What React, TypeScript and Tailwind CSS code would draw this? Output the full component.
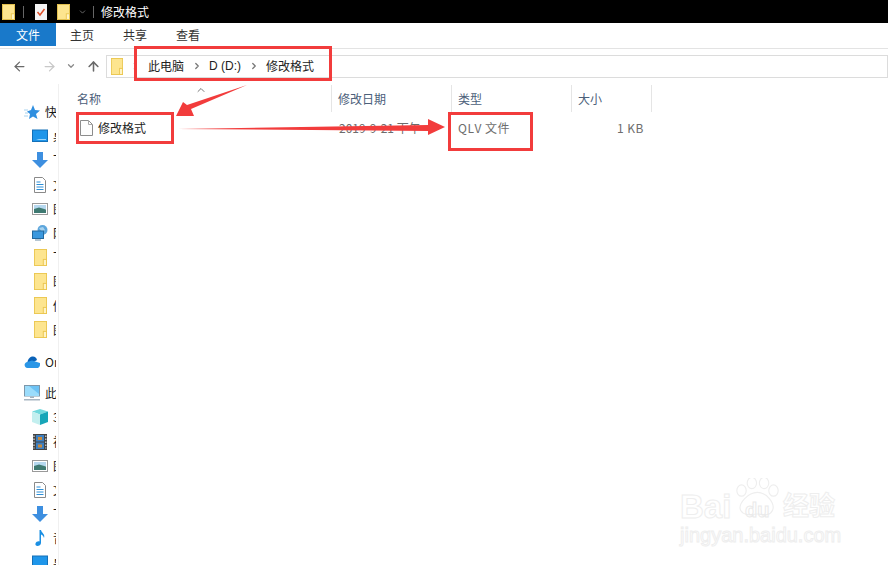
import { ReactNode } from 'react'
import { ArrowLeft, ArrowRight, ArrowUp, ChevronDown, ChevronRight, ChevronUp } from 'lucide-react'

function Folder({ className = 'h-[17px] w-[13px]' }: { className?: string }) {
  return (
    <svg className={className} viewBox="0 0 14 18" preserveAspectRatio="none">
      <rect x="0.5" y="0.5" width="13" height="17" fill="#fde58f" stroke="#ebc64f" />
      <rect x="10" y="11" width="3.5" height="6.5" fill="#fff3c4" stroke="#ebc64f" />
    </svg>
  )
}

function Monitor() {
  return (
    <svg className="h-4 w-4" viewBox="0 0 16 16">
      <rect x="0.5" y="2" width="15" height="11.5" fill="#1f96ea" stroke="#1470b8" />
      <path d="M2 12 L14 12 L14 11 L7 11 L4 12Z" fill="#9bd6fb" />
    </svg>
  )
}

function Download() {
  return (
    <svg className="h-4 w-4" viewBox="0 0 16 16">
      <path d="M5 0 H11 V8 H16 L8 16 L0 8 H5Z" fill="#3d8fe0" />
    </svg>
  )
}

function Doc() {
  return (
    <svg className="h-4 w-4" viewBox="0 0 16 16">
      <path d="M2.5 0.5 H10.5 L13.5 3.5 V15.5 H2.5Z" fill="#fff" stroke="#8a8a8a" />
      <path d="M4.500 5h4M4.500 7.500h7M4.500 10h7M4.500 12.500h7" stroke="#2c8fd8" strokeWidth="1" />
    </svg>
  )
}

function Pictures() {
  return (
    <svg className="h-4 w-4" viewBox="0 0 16 16">
      <rect x="0.500" y="2.500" width="15" height="11" fill="#fff" stroke="#9a9a9a" />
      <rect x="2" y="4" width="12" height="4" fill="#b6d8ef" />
      <path d="M2 8 L7 6.500 L14 8.500 V12 H2Z" fill="#3f7a72" />
    </svg>
  )
}

function Network() {
  return (
    <svg className="h-4 w-4" viewBox="0 0 16 16">
      <circle cx="10.500" cy="5" r="5" fill="#5da6dc" />
      <path d="M7 3 L11 2 L13 5 L10 7Z" fill="#a8d2ee" />
      <rect x="0.500" y="6" width="11" height="7.500" fill="#3a98de" stroke="#23699e" />
      <rect x="3" y="14.500" width="6" height="1" fill="#6d8ea8" />
    </svg>
  )
}

function OneDrive() {
  return (
    <svg className="h-[12px] w-4" viewBox="0 0 16 12">
      <path d="M3.500 6 C4 2.500 6.500 0.500 9 0.500 C11 0.500 12.500 2 13 4 L8 7Z" fill="#0a62b8" />
      <path d="M3.500 12 C0 12 -0.500 7 3 6 L8 4.500 L16 7 C16.500 10 15 12 13 12Z" fill="#2a96e6" />
    </svg>
  )
}

function ThisPc() {
  return (
    <svg className="h-4 w-4" viewBox="0 0 16 16">
      <rect x="0.500" y="0.500" width="15" height="10.500" fill="#6cc2f4" stroke="#7d97aa" />
      <path d="M1 11h14v-2L5 1H1Z" fill="#9bdcfb" />
      <rect x="6" y="11.500" width="4" height="1.500" fill="#9fb1bf" />
      <rect x="0" y="14" width="16" height="1.500" fill="#a8b6c2" />
    </svg>
  )
}

function Cube() {
  return (
    <svg className="h-4 w-4" viewBox="0 0 16 16">
      <path d="M8 0 L16 2.500 L8 5.500 L0 2.500Z" fill="#72d9dd" />
      <path d="M0 2.500 L8 5.500 V16 L0 13Z" fill="#c3efef" />
      <path d="M16 2.500 L8 5.500 V16 L16 13Z" fill="#17a6b8" />
    </svg>
  )
}

function Film() {
  return (
    <svg className="h-4 w-4" viewBox="0 0 16 16">
      <rect x="1" y="0" width="14" height="16" fill="#444" />
      <rect x="4" y="1" width="8" height="6.500" fill="#3c7fc2" />
      <rect x="4" y="8.500" width="8" height="6.500" fill="#3c7fc2" />
      <rect x="6" y="3" width="4" height="3" fill="#c98a3a" />
      <rect x="6" y="10.500" width="4" height="3" fill="#c98a3a" />
      <path d="M2 1.500v13" stroke="#ddd" strokeWidth="1.200" strokeDasharray="1.500 1.500" />
      <path d="M13.800 1.500v13" stroke="#ddd" strokeWidth="1.200" strokeDasharray="1.500 1.500" />
    </svg>
  )
}

function Music() {
  return (
    <svg className="h-4 w-4" viewBox="0 0 16 16">
      <path d="M7.500 0 H9 C9.500 3 13.500 4 12 8 C11.500 6 10.500 5 9 4.500 V13 C9 15 7 16 5.500 16 C4 16 3 15 3.500 13.500 C4 12 6 11 7.500 11.500Z" fill="#1a8fe3" />
    </svg>
  )
}

function NavRow({ icon, label, top = false }: { icon: ReactNode; label: string; top?: boolean }) {
  return (
    <div className={`flex h-[24.200px] shrink-0 items-center ${top ? 'pl-[24px]' : 'pl-[32px]'}`}>
      <span className="flex w-4 shrink-0 items-center justify-center">{icon}</span>
      <span className="ml-[5px] whitespace-nowrap text-[12px] text-[#1a1a1a]">{label}</span>
    </div>
  )
}

function Sidebar() {
  return (
    <aside className="flex w-[59px] shrink-0 flex-col overflow-hidden border-r border-[#f0f0f0] pt-[16px]">
      <div className="w-[56px] overflow-hidden">
        <NavRow top icon={<svg className="h-4 w-4" viewBox="0 0 16 16"><path d="M9 1 L11 6 L16 6.500 L12 10 L13.500 15 L9 12.500 L5 15 L6 10 L3 7.500 L7 6Z" fill="#2f8fe0" /><path d="M0 6h4M1 9h3M0 12h4" stroke="#a8d2ee" /></svg>} label="快速访问" />
        <NavRow icon={<Monitor />} label="桌面" />
        <NavRow icon={<Download />} label="下载" />
        <NavRow icon={<Doc />} label="文档" />
        <NavRow icon={<Pictures />} label="图片" />
        <NavRow icon={<Network />} label="网络" />
        <NavRow icon={<Folder />} label="下" />
        <NavRow icon={<Folder />} label="图" />
        <NavRow icon={<Folder />} label="修" />
        <NavRow icon={<Folder />} label="图" />
        <div className="h-[8px]" />
        <NavRow top icon={<OneDrive />} label="OneDrive" />
        <div className="h-[7px]" />
        <NavRow top icon={<ThisPc />} label="此电脑" />
        <NavRow icon={<Cube />} label="3D" />
        <NavRow icon={<Film />} label="视频" />
        <NavRow icon={<Pictures />} label="图片" />
        <NavRow icon={<Doc />} label="文档" />
        <NavRow icon={<Download />} label="下载" />
        <NavRow icon={<Music />} label="音乐" />
        <NavRow icon={<Monitor />} label="桌面" />
      </div>
    </aside>
  )
}

function Column({ label, className }: { label: string; className: string }) {
  return (
    <div className={`flex h-[27px] items-center border-r border-[#e5e5e5] pl-[6px] text-[12px] text-[#4c607a] ${className}`}>
      {label}
    </div>
  )
}

function Annotations() {
  return (
    <>
      <div className="absolute left-[134px] top-[46px] h-[35px] w-[198px] border-[3px] border-[#f23c3c]" />
      <div className="absolute left-[76px] top-[112px] h-[32px] w-[98px] border-[3px] border-[#f23c3c]" />
      <div className="absolute left-[448px] top-[112px] h-[39px] w-[85px] border-[3px] border-[#f23c3c]" />
      <svg className="absolute left-0 top-0 h-[565px] w-[888px]" viewBox="0 0 888 565">
        <path d="M247 85 L191 109 L194 116 L176 116 L183 102 L187 105 Z" fill="#f23c3c" />
        <path d="M178 129 L428 125 L428 119 L445 127 L428 135 L428 131 Z" fill="#f23c3c" />
      </svg>
    </>
  )
}

function Watermark() {
  return (
    <div className="absolute left-[680px] top-[478px] h-[70px] w-[180px]">
      <svg className="absolute left-[54px] top-0 h-[42px] w-[47px]" viewBox="0 0 50 42" fill="none" stroke="#eeeeee" strokeWidth="1.200">
        <ellipse cx="8" cy="12" rx="5" ry="6" />
        <ellipse cx="19" cy="4" rx="5" ry="6" />
        <ellipse cx="32" cy="4" rx="5" ry="6" />
        <ellipse cx="42" cy="12" rx="5" ry="6" />
        <path d="M25 14 C35 14 44 26 41 33 C38 40 30 37 25 37 C20 37 11 40 7 33 C4 26 15 14 25 14Z" />
      </svg>
      <span className="absolute left-0 top-[12px] font-['Liberation_Sans',sans-serif] text-[33px] font-bold leading-none text-transparent [-webkit-text-stroke:1px_#eeeeee]">Bai</span>
      <span className="absolute left-[65px] top-[22px] font-['Liberation_Sans',sans-serif] text-[20px] font-bold leading-none text-transparent [-webkit-text-stroke:1px_#eaeaea]">du</span>
      <span className="absolute left-[103px] top-[13px] text-[26px] font-bold leading-none text-transparent [-webkit-text-stroke:1px_#eeeeee]">经验</span>
      <span className="absolute left-0 top-[47px] font-['Liberation_Sans',sans-serif] text-[20px] leading-none text-transparent [-webkit-text-stroke:1px_#eeeeee]">jingyan.baidu.com</span>
    </div>
  )
}

export default function App() {
  return (
    <div className="relative flex h-[565px] w-[888px] flex-col overflow-hidden bg-white font-['Noto_Sans_CJK_SC','Noto_Sans',sans-serif]">
      {/* Title bar */}
      <div className="flex h-[23px] shrink-0 items-center bg-black pl-[2px] text-[12px] text-white">
        <Folder className="h-[16px] w-[13px]" />
        <span className="ml-[8px] h-[12px] w-px bg-[#666]" />
        <svg className="ml-[11px] h-[16px] w-[12px]" viewBox="0 0 12 16">
          <rect width="12" height="16" fill="#f4f4f4" />
          <path d="M2.500 8 L5 11 L9.500 5" fill="none" stroke="#e0502a" strokeWidth="1.500" />
        </svg>
        <Folder className="ml-[10px] h-[16px] w-[13px]" />
        <ChevronDown className="ml-[8px] h-[10px] w-[9px] text-[#888]" />
        <span className="ml-[6px] h-[12px] w-px bg-[#666]" />
        <span className="ml-[7px]">修改格式</span>
      </div>

      {/* Ribbon tabs */}
      <div className="flex h-[25px] shrink-0 items-start text-[12px] leading-[23px] text-[#333]">
        <div className="h-[23px] w-[56px] bg-[#1979ca] text-center text-white">文件</div>
        <div className="ml-[14px] w-[24px]">主页</div>
        <div className="ml-[29px] w-[24px]">共享</div>
        <div className="ml-[29px] w-[24px]">查看</div>
      </div>

      {/* Address row */}
      <div className="flex h-[36px] shrink-0 items-center border-t border-[#e3e3e3] pb-[1px]">
        <ArrowLeft className="ml-[12px] h-[15px] w-[15px] text-[#6a6a6a]" strokeWidth={2} />
        <ArrowRight className="ml-[15px] h-[15px] w-[15px] text-[#c8c8c8]" strokeWidth={2} />
        <ChevronDown className="ml-[9px] h-[10px] w-[10px] text-[#8a8a8a]" strokeWidth={3} />
        <ArrowUp className="ml-[10px] h-[15px] w-[15px] text-[#6a6a6a]" strokeWidth={2.500} />
        <div className="ml-[5px] flex h-[23px] flex-1 items-center border border-[#dcdcdc] pl-[4px] text-[12px] text-[#222]">
          <Folder className="h-[17px] w-[12px]" />
          <ChevronRight className="ml-[7px] h-[10px] w-[10px] text-[#ccc]" />
          <span className="ml-[8px]">此电脑</span>
          <ChevronRight className="ml-[8px] h-[10px] w-[10px] text-[#777]" strokeWidth={3} />
          <span className="ml-[7px] font-['Liberation_Sans','Noto_Sans',sans-serif]">D (D:)</span>
          <ChevronRight className="ml-[8px] h-[10px] w-[10px] text-[#777]" strokeWidth={3} />
          <span className="ml-[7px]">修改格式</span>
        </div>
      </div>

      <div className="flex min-h-0 flex-1">
        <Sidebar />
        <main className="relative flex-1 pt-[1px]">
          {/* Column headers */}
          <div className="flex">
            <Column label="名称" className="w-[273px] pl-[18px]" />
            <Column label="修改日期" className="w-[120px]" />
            <Column label="类型" className="w-[120px]" />
            <Column label="大小" className="w-[80px]" />
          </div>
          <ChevronUp className="absolute left-[136px] top-0 h-[12px] w-[12px] text-[#777]" />

          {/* File row */}
          <div className="mt-[6px] flex h-[20px] items-center text-[12px] text-[#6d6d6d]">
            <div className="flex w-[273px] items-center pl-[21px] text-[#222]">
              <svg className="h-[16px] w-[13px]" viewBox="0 0 13 16">
                <path d="M0.500 0.500 H8.500 L12.500 4.500 V15.500 H0.500Z" fill="#fdfdfd" stroke="#8c8c8c" />
                <path d="M8.500 0.500 V4.500 H12.500" fill="none" stroke="#a8a8a8" />
              </svg>
              <span className="ml-[5px]">修改格式</span>
            </div>
            <div className="w-[120px] pl-[7px]">2019-9-21 下午</div>
            <div className="w-[115px] pl-[6px] tracking-[0.5px]">QLV 文件</div>
            <div className="w-[77px] text-right tracking-[0.5px]">1 KB</div>
          </div>
        </main>
      </div>

      <Watermark />
      <Annotations />
    </div>
  )
}
